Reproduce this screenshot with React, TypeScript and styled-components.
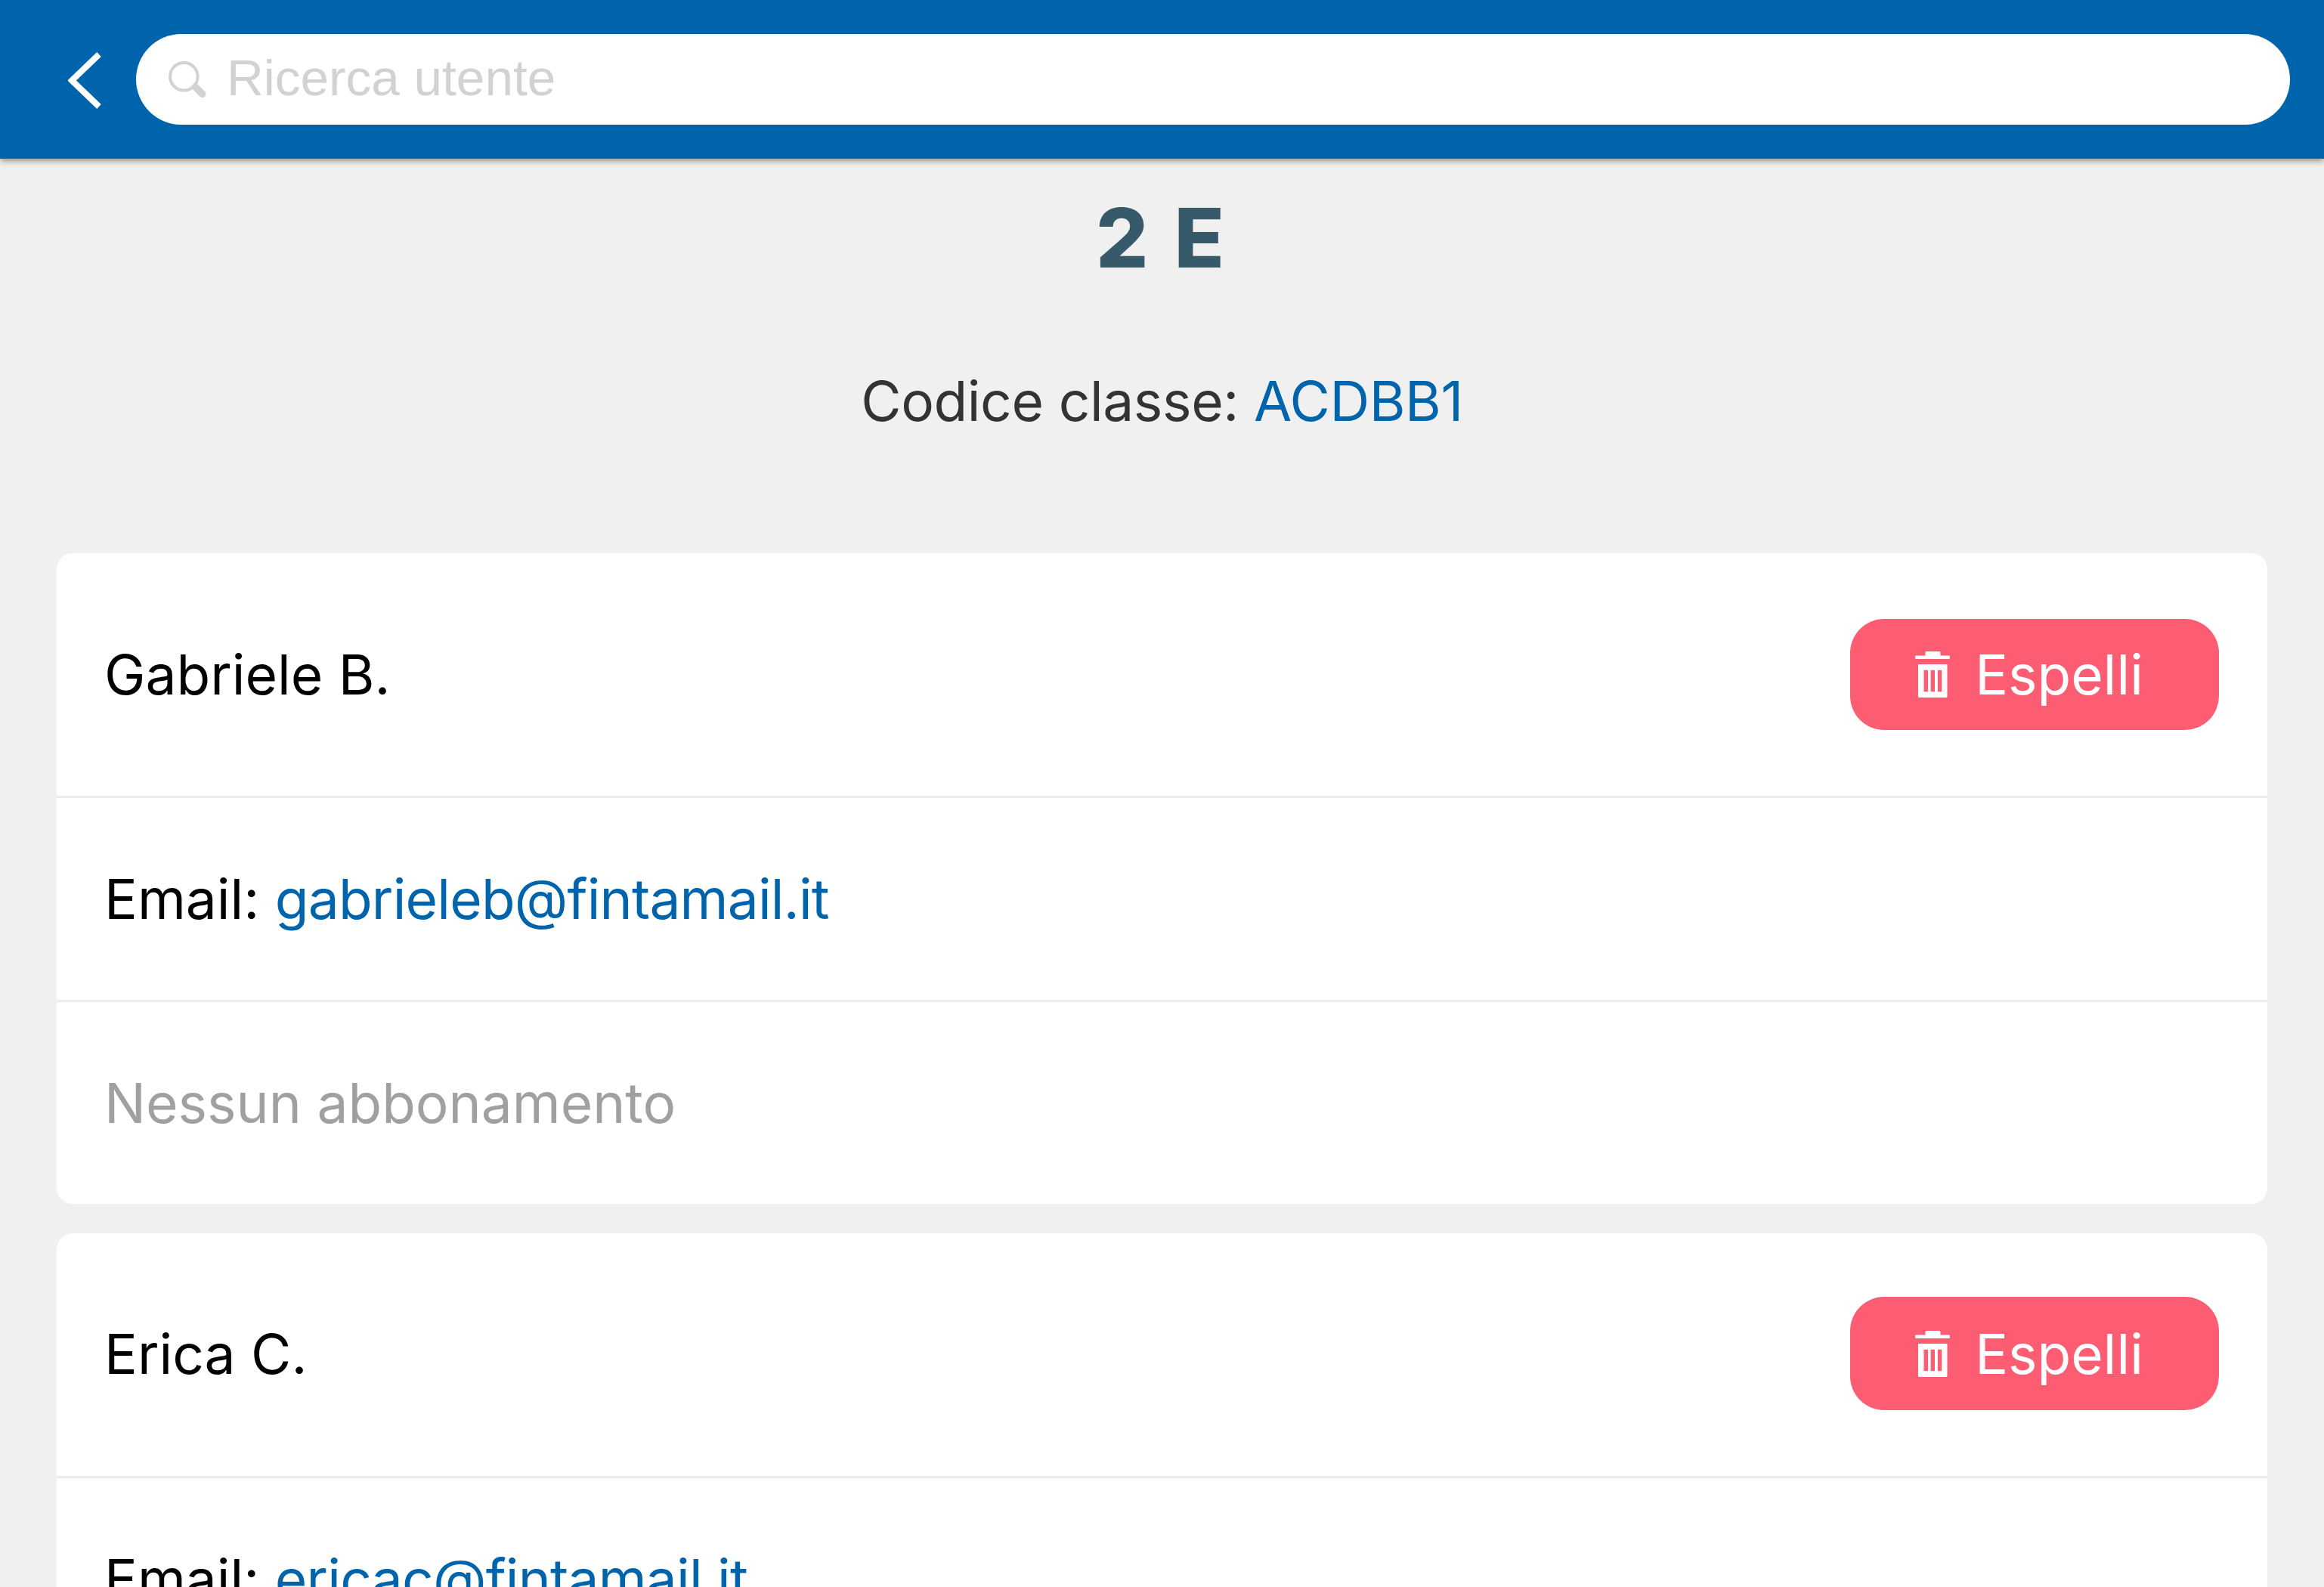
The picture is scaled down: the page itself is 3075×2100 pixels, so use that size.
import React from "react";
import styled, { createGlobalStyle } from "styled-components";

const GlobalStyle = createGlobalStyle`
  html, body {
    margin: 0;
    padding: 0;
    height: 2100px;
    overflow: hidden;
    background: #f0f0f0;
  }
  * {
    box-sizing: border-box;
  }
`;

const Page = styled.div`
  height: 2100px;
  overflow: hidden;
  font-family: "Inter", "Liberation Sans", sans-serif;
`;

const Header = styled.header`
  height: 210px;
  background: #0064ad;
  box-shadow: 0 3px 8px rgba(0, 0, 0, 0.4);
  display: flex;
  align-items: center;
  padding: 0 45px 0 90px;
  position: relative;
`;

const BackButton = styled.svg`
  width: 44px;
  height: 75px;
  margin-right: 46px;
  margin-top: 2px;
  flex: none;
`;

const SearchBox = styled.div`
  flex: 1;
  height: 120px;
  border-radius: 60px;
  background: #fff;
  display: flex;
  align-items: center;
  padding-left: 43px;
`;

const SearchIcon = styled.svg`
  width: 50px;
  height: 48px;
  margin-right: 27px;
  flex: none;
`;

const SearchLabel = styled.span`
  font-family: "Liberation Sans", Arial, sans-serif;
  font-size: 67.5px;
  line-height: 76px;
  margin-bottom: 4px;
  color: #d2d2d2;
`;

const Title = styled.h1`
  margin: 0;
  padding-top: 50px;
  text-align: center;
  font-family: "Inter", sans-serif;
  font-size: 109px;
  line-height: 108px;
  font-weight: 800;
  letter-spacing: 5px;
  color: #375a6a;
`;

const ClassCode = styled.p`
  margin: 0;
  padding-top: 118px;
  text-align: center;
  font-size: 73px;
  line-height: 90px;
  letter-spacing: -0.4px;
  color: #333;
`;

const Accent = styled.span`
  color: #0064ad;
`;

const EmailLink = styled.span`
  color: #0064ad;
  letter-spacing: -0.8px;
`;

const CardList = styled.div`
  padding: 156px 75px 0;
  display: flex;
  flex-direction: column;
  gap: 39px;
`;

const Card = styled.section`
  background: #fff;
  border-radius: 21px;
  overflow: hidden;
`;

const Row = styled.div<{ $height: number; $lift?: number }>`
  height: ${(p) => p.$height}px;
  padding: 0 64px ${(p) => p.$lift || 0}px 63px;
  display: flex;
  align-items: center;
  justify-content: space-between;
  font-size: 73px;
  color: #000;
  & + & {
    border-top: 3px solid #e8eded;
  }
`;

const Muted = styled.span`
  color: #a0a0a0;
`;

const KickButton = styled.button<{ $height: number }>`
  width: 488px;
  height: ${(p) => p.$height}px;
  border: 0;
  border-radius: 45px;
  background: #fd5d73;
  color: #fff;
  font-family: inherit;
  font-size: 73px;
  display: flex;
  align-items: center;
  justify-content: center;
  gap: 33px;
  padding: 0 14px 0 0;
`;

const TrashIcon = styled.svg`
  width: 46px;
  height: 61px;
  flex: none;
`;

const students = [
  { name: "Gabriele B.", email: "gabrieleb@fintamail.it", buttonHeight: 147, lift: 0 },
  { name: "Erica C.", email: "ericac@fintamail.it", buttonHeight: 150, lift: 3 },
];

const Trash = () => (
  <TrashIcon viewBox="0 0 46 61" fill="#fff">
    <path
      fillRule="evenodd"
      d="M13.5 5.5V1.5Q13.5 0 15 0H32Q33.5 0 33.5 1.5V5.5H45Q46 5.5 46 7.7T45 10H1Q0 10 0 7.7T1 5.5ZM4 17H42.5V59.5Q42.5 61 41 61H5.5Q4 61 4 59.5ZM11.5 24.7V53.3H17V24.7ZM20.7 24.7V53.3H26V24.7ZM30 24.7V53.3H35.2V24.7Z"
    />
  </TrashIcon>
);

const App = () => {
  return (
    <Page>
      <GlobalStyle />
      <Header>
        <BackButton viewBox="0 0 44 75" fill="none">
          <path d="M41 3L5 37.5L41 72" stroke="#fff" strokeWidth="8" />
        </BackButton>
        <SearchBox>
          <SearchIcon viewBox="0 0 50 48" fill="none">
            <circle cx="20.3" cy="20.3" r="18.3" stroke="#d2d2d2" strokeWidth="4" />
            <path d="M35.5 34L44.7 43.3" stroke="#d2d2d2" strokeWidth="9.5" strokeLinecap="round" />
          </SearchIcon>
          <SearchLabel>Ricerca utente</SearchLabel>
        </SearchBox>
      </Header>
      <Title>2 E</Title>
      <ClassCode>
        Codice classe: <Accent>ACDBB1</Accent>
      </ClassCode>
      <CardList>
        {students.map((s) => (
          <Card key={s.email}>
            <Row $height={321} $lift={s.lift}>
              {s.name}
              <KickButton $height={s.buttonHeight}>
                <Trash />
                Espelli
              </KickButton>
            </Row>
            <Row $height={270}>
              <span>
                Email: <EmailLink>{s.email}</EmailLink>
              </span>
            </Row>
            <Row $height={270}>
              <Muted>Nessun abbonamento</Muted>
            </Row>
          </Card>
        ))}
      </CardList>
    </Page>
  );
};

export default App;
